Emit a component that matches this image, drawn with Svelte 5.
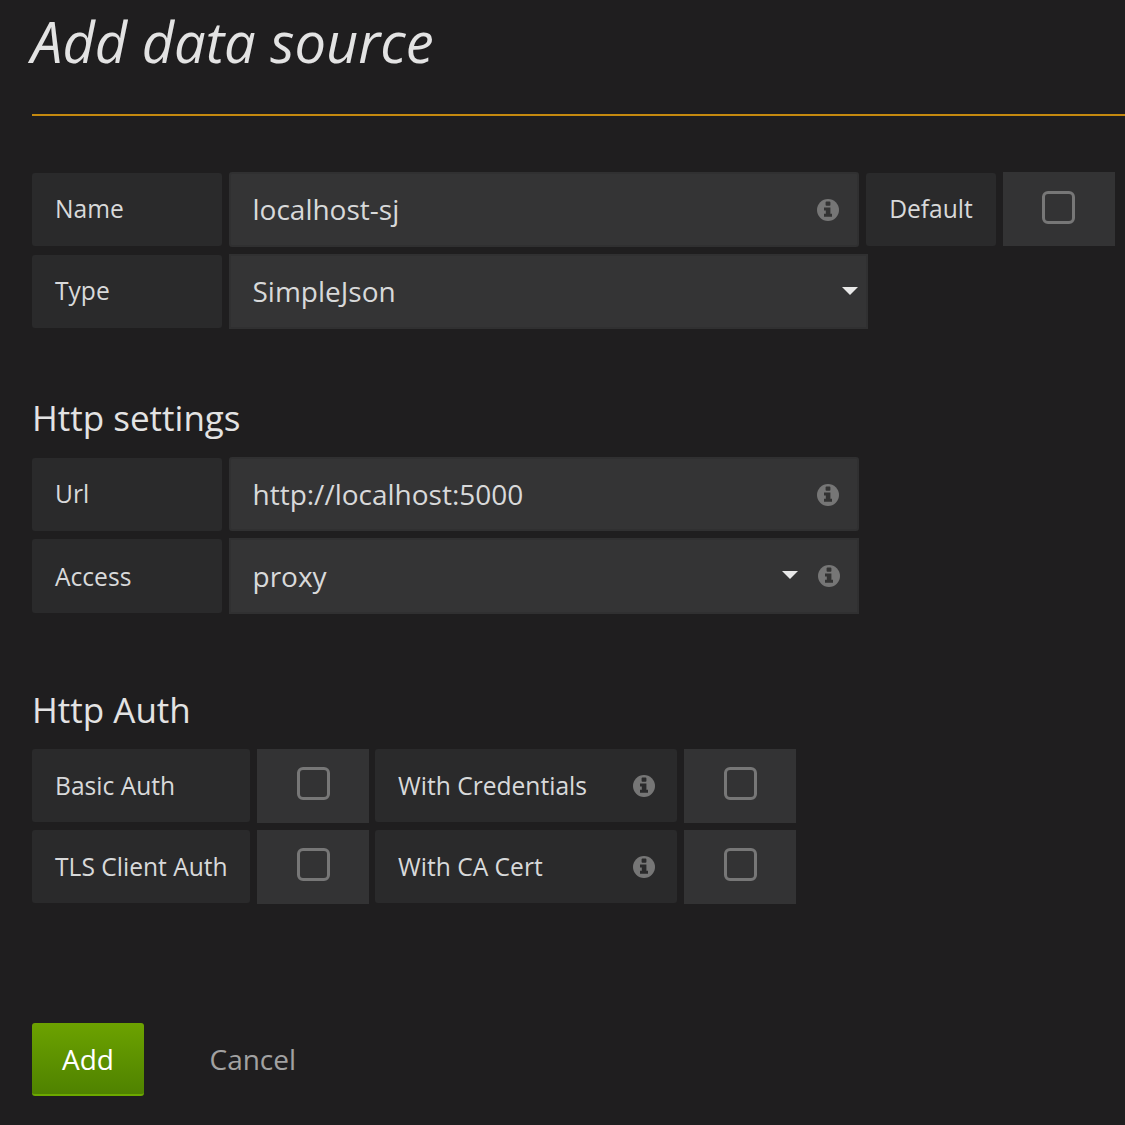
{#snippet infoIcon()}
  <svg class="info" viewBox="0 0 22 22" aria-hidden="true">
    <circle cx="11" cy="11" r="11" fill="#767676" />
    <rect class="glyph" x="8.6" y="2.6" width="4.8" height="4.2" rx="0.8" fill="#333" />
    <path class="glyph" d="M7 8.6h6.4v6.2h1.6v3H7v-3h1.8v-3.2H7z" fill="#333" />
  </svg>
{/snippet}

{#snippet caret()}
  <span class="caret"></span>
{/snippet}

<div class="page">
  <h1>Add data source</h1>
  <div class="rule"></div>

  <section class="first">
    <div class="row">
      <div class="label w190">Name</div>
      <div class="input w630"><span>localhost-sj</span>{@render infoIcon()}</div>
      <div class="label w130 def">Default</div>
      <div class="box w112 end"><span class="check"></span></div>
    </div>
    <div class="row">
      <div class="label w190">Type</div>
      <div class="input w639"><span>SimpleJson</span>{@render caret()}</div>
    </div>
  </section>

  <h2 class="h1">Http settings</h2>
  <section>
    <div class="row url">
      <div class="label w190">Url</div>
      <div class="input w630"><span>http://localhost:5000</span>{@render infoIcon()}</div>
    </div>
    <div class="row access">
      <div class="label w190">Access</div>
      <div class="input w630 acc"><span>proxy</span><span class="cluster">{@render caret()}{@render infoIcon()}</span></div>
    </div>
  </section>

  <h2 class="h2">Http Auth</h2>
  <section class="auth">
    <div class="row tight">
      <div class="label w218">Basic Auth</div>
      <div class="box w112"><span class="check"></span></div>
      <div class="label w302 split"><span>With Credentials</span>{@render infoIcon()}</div>
      <div class="box w112"><span class="check"></span></div>
    </div>
    <div class="row tight">
      <div class="label w218">TLS Client Auth</div>
      <div class="box w112"><span class="check"></span></div>
      <div class="label w302 split"><span>With CA Cert</span>{@render infoIcon()}</div>
      <div class="box w112"><span class="check"></span></div>
    </div>
  </section>

  <div class="actions">
    <button class="add">Add</button>
    <a class="cancel" href="#cancel">Cancel</a>
  </div>
</div>

<style>
  :global(body) {
    margin: 0;
    background: #1f1e1f;
  }
  .page {
    height: 1125px;
    overflow: hidden;
    box-sizing: border-box;
    padding-left: 32px;
    font-family: "Open Sans", sans-serif;
    color: #d8d9da;
    font-size: 24.6px;
  }
  h1 {
    margin: 0 0 0 -1px;
    height: 114px;
    box-sizing: border-box;
    padding-top: 4px;
    font-size: 56px;
    line-height: 74px;
    font-weight: 400;
    font-style: italic;
    color: #e3e3e3;
  }
  .rule {
    height: 2px;
    background: #c4890f;
  }
  .first {
    margin-top: 56px;
  }
  .row {
    display: flex;
    align-items: center;
    gap: 7px;
    height: 75px;
    margin-bottom: 7px;
  }
  .url {
    height: 74px;
  }
  .url .input {
    height: 74px;
    padding-bottom: 0;
  }
  .url .label {
    padding-bottom: 1px;
  }
  .access {
    height: 76px;
  }
  .access .input {
    height: 76px;
    padding-bottom: 0;
  }
  .access .label {
    height: 74px;
    padding-bottom: 0;
  }
  .access .cluster {
    margin-top: -2px;
  }
  .tight {
    height: 74px;
    align-items: flex-start;
  }
  .label {
    box-sizing: border-box;
    height: 73px;
    display: flex;
    align-items: center;
    padding: 0 0 3px 23px;
    background: #2a2a2b;
    border-radius: 3px;
  }
  .tight .label {
    padding-bottom: 1px;
  }
  .def {
    justify-content: center;
    padding: 0 0 3px;
  }
  .input {
    box-sizing: border-box;
    height: 75px;
    display: flex;
    align-items: center;
    justify-content: space-between;
    padding: 0 18px 2px 21.5px;
    background: #343435;
    border: 2px solid #303031;
    border-radius: 3px;
    font-size: 28px;
  }
  .input .info {
    margin-top: 2px;
  }
  .box {
    height: 74px;
    background: #333334;
    display: flex;
    align-items: center;
    justify-content: center;
    align-self: flex-start;
  }
  .check {
    box-sizing: border-box;
    width: 33px;
    height: 33px;
    border: 3px solid #777;
    border-radius: 6px;
    margin-top: -3px;
  }
  .end .check {
    margin-right: 1px;
  }
  .tight .check {
    margin-top: -5px;
  }
  .w190 { width: 190px; }
  .w130 { width: 130px; }
  .w112 { width: 112px; }
  .w218 { width: 218px; }
  .w302 { width: 302px; margin-left: -1px; }
  .w630 { width: 630px; }
  .w639 { width: 639px; padding-right: 8px; border-radius: 0; }
  .tight .split {
    justify-content: space-between;
    padding: 0 22px 0 23px;
  }
  .split .info {
    margin-top: 1px;
  }
  .info {
    width: 22px;
    height: 22px;
    flex: none;
  }
  .split .glyph {
    fill: #2a2a2b;
  }
  .acc {
    padding-right: 17px;
    border-radius: 0;
  }
  .cluster {
    display: flex;
    align-items: center;
    gap: 20px;
  }
  .caret {
    width: 0;
    height: 0;
    border-left: 8px solid transparent;
    border-right: 8px solid transparent;
    border-top: 8px solid #e8e8e8;
  }
  .h1, .h2 {
    margin: 0;
    font-size: 35px;
    font-weight: 400;
    line-height: 48px;
    color: #e3e3e3;
  }
  .h1 { padding-top: 58px; padding-bottom: 15px; }
  .h2 { padding-top: 65px; padding-bottom: 15px; }
  .actions {
    display: flex;
    align-items: center;
    margin-top: 119px;
    gap: 65.5px;
  }
  .add {
    width: 112px;
    height: 73px;
    border: 0;
    border-bottom: 2px solid #6ca800;
    border-radius: 3px;
    background: linear-gradient(#6ca200, #4f8200);
    color: #fff;
    font: 400 28px "Open Sans", sans-serif;
  }
  .cancel {
    color: #a2a2a2;
    text-decoration: none;
    font-size: 28px;
    margin-bottom: 2px;
  }
</style>
